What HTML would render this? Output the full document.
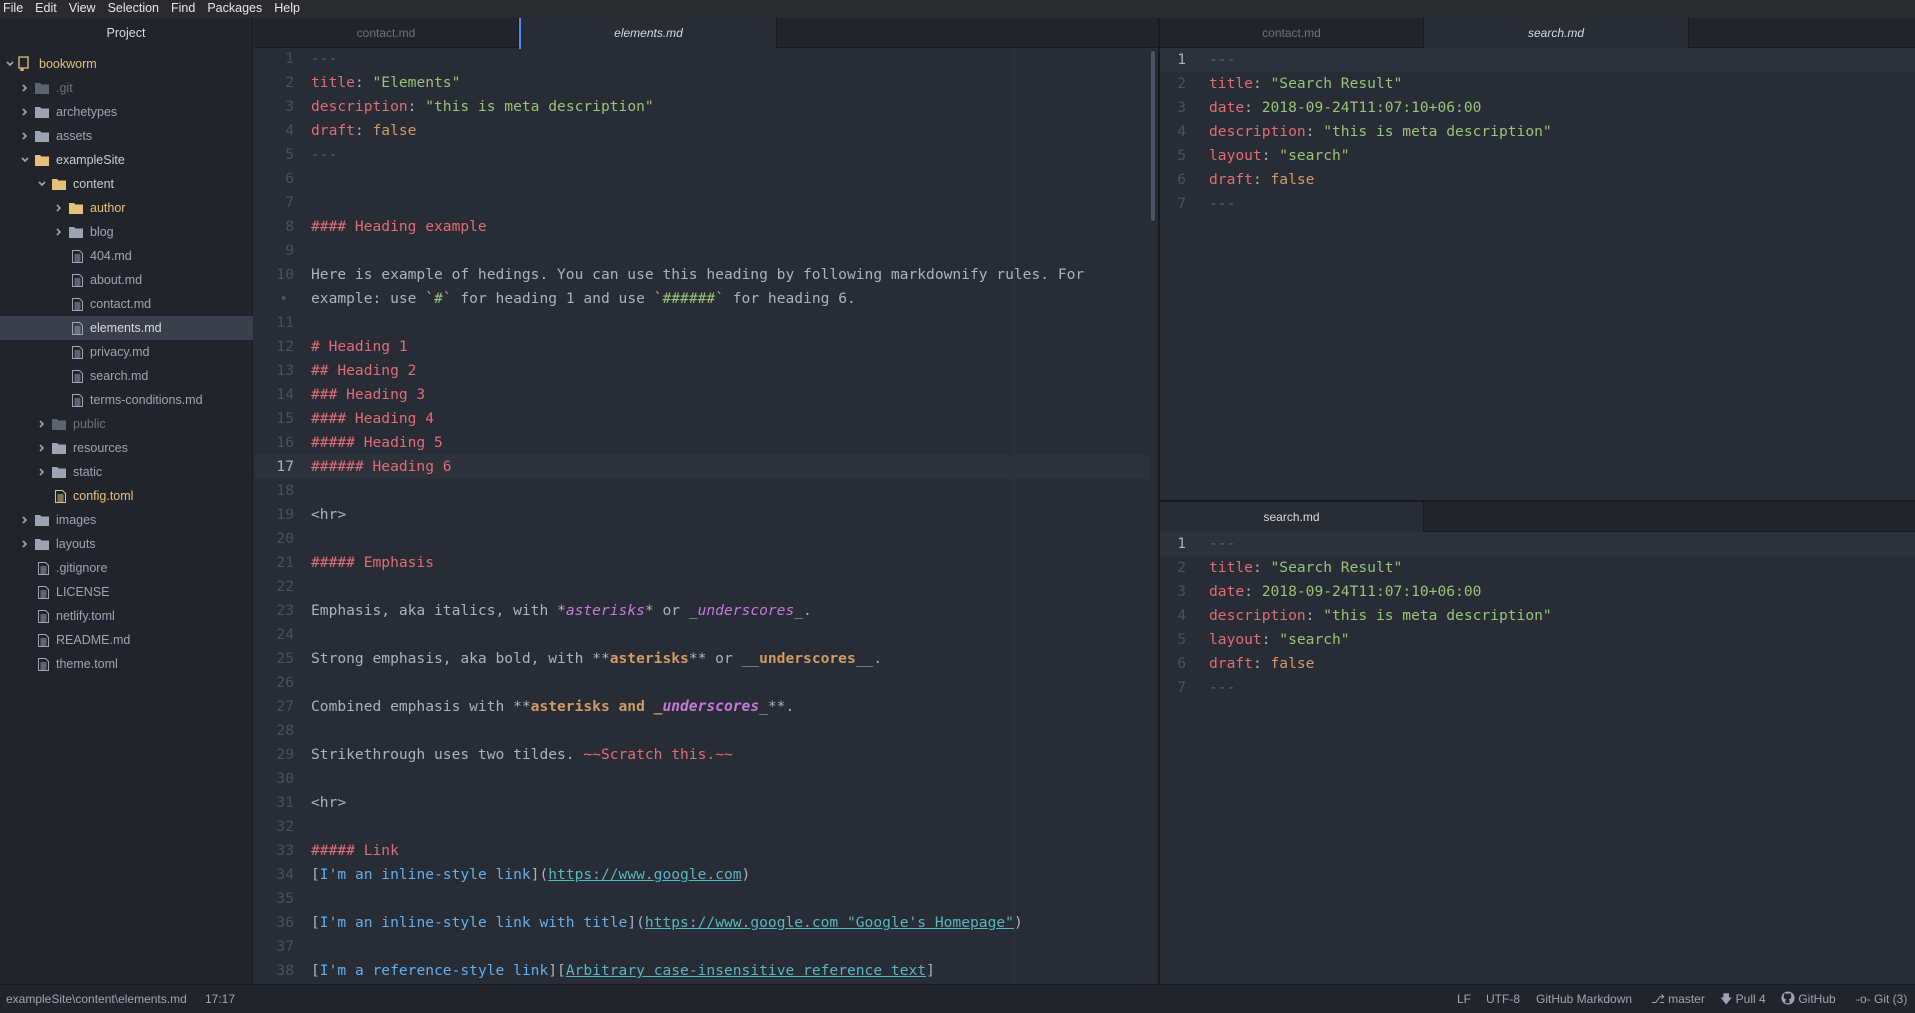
<!DOCTYPE html>
<html><head><meta charset="utf-8"><style>
*{margin:0;padding:0;box-sizing:border-box}
body{width:1915px;height:1013px;overflow:hidden;background:#282c34;font-family:"Liberation Sans",sans-serif;position:relative}
.abs{position:absolute}
#menu{left:0;top:0;width:1915px;height:18px;background:#2a2b2e;color:#e6e6e6;font-size:12.5px;line-height:16px}
#menu span{margin:0 0 0 3px;padding-right:9px}
#side{left:0;top:18px;width:253px;height:966px;background:#21252b;border-right:1px solid #181a1f}
#side .hd{height:30px;line-height:30px;text-align:center;color:#d7dae0;font-size:12.5px}
.row{position:absolute;left:0;width:253px;height:24px;line-height:24px;font-size:12.5px;color:#9da5b4;white-space:nowrap}
.row svg{position:absolute;top:6px}
.sel{background:#3a3f4b;color:#d7dae0}
.tabs{background:#21252b;border-bottom:1px solid #181a1f;height:30px}
.tab{position:absolute;top:0;height:30px;line-height:30px;text-align:center;font-size:12px;color:#6b717d;border-right:1px solid #181a1f}
.tab.act{background:#282c34;color:#d7dae0;font-style:italic;height:31px}
.code{font-family:"DejaVu Sans Mono","Liberation Mono",monospace;font-size:14.6px;white-space:pre;color:#abb2bf}
.ln{position:absolute;height:24px;line-height:24px;text-align:right;color:#495162;font-family:"DejaVu Sans Mono",monospace;font-size:14.6px}
.tx{position:absolute;height:24px;line-height:24px}
.r{color:#e06c75}.g{color:#98c379}.o{color:#d19a66}.c{color:#5c6370}.p{color:#c678dd;font-style:italic}.b{color:#61afef}.u{color:#56b6c2;text-decoration:underline}.ob{color:#d19a66;font-weight:bold}.pb{color:#c678dd;font-style:italic;font-weight:bold}
#status{left:0;top:984px;width:1915px;height:29px;background:#21252b;border-top:1px solid #181a1f;color:#9da5b4;font-size:12px;line-height:28px}
#status span{position:absolute;top:0}
</style></head><body>
<div id="menu" class="abs"><span>File</span><span>Edit</span><span>View</span><span>Selection</span><span>Find</span><span>Packages</span><span>Help</span></div>

<div id="side" class="abs">
<div class="hd">Project</div>
</div>
<div id="tree"></div>

<div class="abs tabs" style="left:254px;top:18px;width:905px">
 <div class="tab" style="left:0;width:265px">contact.md</div>
 <div class="tab act" style="left:265px;width:258px;border-left:2px solid #568af2">elements.md</div>
</div>
<div class="abs" style="left:1014px;top:48px;width:1px;height:936px;background:#2f343d"></div>
<div class="abs" style="left:1151px;top:51px;width:4px;height:170px;background:#4b5263;border-radius:2px"></div>
<div class="abs" style="left:1158px;top:18px;width:2px;height:966px;background:#181a1f"></div>
<div class="abs" style="left:254px;top:455px;width:896px;height:24px;background:#2c313a"></div>
<div id="L" class="code"></div>

<div class="abs tabs" style="left:1160px;top:18px;width:755px">
 <div class="tab" style="left:0;width:264px">contact.md</div>
 <div class="tab act" style="left:264px;width:265px">search.md</div>
</div>
<div class="abs" style="left:1160px;top:48px;width:755px;height:24px;background:#2c313a"></div>
<div class="abs" style="left:1160px;top:500px;width:755px;height:2px;background:#181a1f"></div>
<div class="abs tabs" style="left:1160px;top:502px;width:755px">
 <div class="tab act" style="left:0;width:264px;font-style:normal">search.md</div>
</div>
<div class="abs" style="left:1160px;top:532px;width:755px;height:24px;background:#2c313a"></div>
<div id="R" class="code"></div>

<div id="status" class="abs">
<span style="left:6px">exampleSite\content\elements.md</span>
<span style="left:205px">17:17</span>
<span style="left:1457px">LF</span>
<span style="left:1486px">UTF-8</span>
<span style="left:1536px">GitHub Markdown</span>
<span style="left:1651px">&#x2387; master</span>
<span style="left:1720px">&#x1F847; Pull 4</span>
<span style="left:1781px"><svg width="14" height="14" viewBox="0 0 16 16" style="vertical-align:-2px"><circle cx="8" cy="8" r="7.5" fill="#9da5b4"/><path d="M5 14v-3c0-1 1-1.5 1-1.5-2-.3-3-1.2-3-3.3 0-.8.3-1.4.7-1.9-.1-.3-.2-1 .1-1.8 0 0 .7-.1 1.9.7a6 6 0 0 1 3.4 0c1.2-.8 1.9-.7 1.9-.7.3.8.2 1.5.1 1.8.4.5.7 1.1.7 1.9 0 2.1-1 3-3 3.3 0 0 1 .5 1 1.5v3z" fill="#21252b"/></svg> GitHub</span>
<span style="left:1856px">-o- Git (3)</span>
</div>

<script>
function folder(c){return '<svg width="14" height="12" viewBox="0 0 14 12"><path d="M0 1h5l1.5 1.5H14V12H0z" fill="'+c+'"/></svg>'}
function file(c){return '<svg width="11" height="13" viewBox="0 0 11 13"><path d="M.5.5h7l3 3v9h-10z" fill="none" stroke="'+c+'"/><path d="M2.5 5h6M2.5 7h6M2.5 9h6M2.5 11h6" stroke="'+c+'"/></svg>'}
function chev(open){return open?'<svg width="8" height="8" viewBox="0 0 8 8" style="top:8px"><path d="M1 2l3 3 3-3" fill="none" stroke="#9da5b4" stroke-width="1.6"/></svg>':'<svg width="8" height="8" viewBox="0 0 8 8" style="top:8px"><path d="M2 1l3 3-3 3" fill="none" stroke="#9da5b4" stroke-width="1.6"/></svg>'}
var T=[
[0,'bookworm','book',1,'#e5c07b'],
[1,'.git','f',0,'#6b717d','#5c6370'],
[1,'archetypes','f',0],[1,'assets','f',0],
[1,'exampleSite','f',1,'#c8ccd4','#e5c07b'],
[2,'content','f',1,'#c8ccd4','#e5c07b'],
[3,'author','f',0,'#e5c07b','#e5c07b'],[3,'blog','f',0],
[3,'404.md','d'],[3,'about.md','d'],[3,'contact.md','d'],[3,'elements.md','d',null,'#d7dae0'],
[3,'privacy.md','d'],[3,'search.md','d'],[3,'terms-conditions.md','d'],
[2,'public','f',0,'#6b717d','#5c6370'],[2,'resources','f',0],[2,'static','f',0],
[2,'config.toml','d',null,'#e5c07b','#e5c07b'],
[1,'images','f',0],[1,'layouts','f',0],
[1,'.gitignore','d'],[1,'LICENSE','d'],[1,'netlify.toml','d'],[1,'README.md','d'],[1,'theme.toml','d']];
var h='';
T.forEach(function(t,i){
 var lv=t[0],x0=lv*17+6;var col=t[4]||'#9da5b4';
 var cls='row'+(t[1]=='elements.md'?' sel':'');
 var s='<div class="'+cls+'" style="top:'+(52+i*24)+'px;color:'+col+'">';
 if(t[2]=='book'){s+='<span style="position:absolute;left:6px">'+chev(1)+'</span><svg width="12" height="15" viewBox="0 0 12 15" style="position:absolute;left:18px;top:4px"><path d="M1 1h9v11H1z M3 12v3l1-1 1 1v-3" fill="none" stroke="#e5c07b" stroke-width="1.3"/></svg><span style="position:absolute;left:39px">bookworm</span>';}
 else{
  var isF=t[2]=='f';
  if(isF)s+='<span style="position:absolute;left:'+(x0-2)+'px;top:0">'+chev(t[3])+'</span>';
  var icol=t[5]||'#9da5b4';
  var ix=x0+12+(isF?0:3);
  s+='<span style="position:absolute;left:'+ix+'px;top:0">'+(isF?folder(icol):file(icol))+'</span>';
  s+='<span style="position:absolute;left:'+(x0+33)+'px">'+t[1]+'</span>';
 }
 h+=s+'</div>';
});
document.getElementById('tree').innerHTML=h;

function E(s){return s.replace(/&/g,'&amp;').replace(/</g,'&lt;')}
function sp(c,t){return '<span class="'+c+'">'+E(t)+'</span>'}
var L=[
['1',sp('c','---')],
['2',sp('r','title')+': '+sp('g','"Elements"')],
['3',sp('r','description')+': '+sp('g','"this is meta description"')],
['4',sp('r','draft')+': '+sp('o','false')],
['5',sp('c','---')],['6',''],['7',''],
['8',sp('r','#### Heading example')],['9',''],
['10','Here is example of hedings. You can use this heading by following markdownify rules. For'],
['•','example: use `'+sp('g','#')+'` for heading 1 and use `'+sp('g','######')+'` for heading 6.'],
['11',''],
['12',sp('r','# Heading 1')],['13',sp('r','## Heading 2')],['14',sp('r','### Heading 3')],['15',sp('r','#### Heading 4')],['16',sp('r','##### Heading 5')],['17',sp('r','###### Heading 6')],
['18',''],['19','&lt;hr>'],['20',''],['21',sp('r','##### Emphasis')],['22',''],
['23','Emphasis, aka italics, with *'+sp('p','asterisks')+'* or _'+sp('p','underscores')+'_.'],
['24',''],
['25','Strong emphasis, aka bold, with **'+sp('ob','asterisks')+'** or __'+sp('ob','underscores')+'__.'],
['26',''],
['27','Combined emphasis with **'+sp('ob','asterisks and _')+sp('pb','underscores')+'_**.'],
['28',''],
['29','Strikethrough uses two tildes. '+sp('r','~~Scratch this.~~')],
['30',''],['31','&lt;hr>'],['32',''],['33',sp('r','##### Link')],
['34','['+sp('b',"I'm an inline-style link")+']('+sp('u','https://www.google.com')+')'],
['35',''],
['36','['+sp('b',"I'm an inline-style link with title")+']('+sp('u','https://www.google.com "Google\'s Homepage"')+')'],
['37',''],
['38','['+sp('b',"I'm a reference-style link")+']['+sp('u','Arbitrary case-insensitive reference text')+']']
];
var o='';
L.forEach(function(l,i){var y=47+i*24;
 o+='<div class="ln" style="left:254px;width:40px;top:'+y+'px;'+(l[0]=='17'?'color:#abb2bf;':'')+(l[0]=='•'?'padding-right:6px;':'')+'">'+l[0]+'</div>';
 o+='<div class="tx" style="left:311px;top:'+y+'px">'+l[1]+'</div>';});
document.getElementById('L').innerHTML=o;
var R=[sp('c','---'),sp('r','title')+': '+sp('g','"Search Result"'),sp('r','date')+': '+sp('g','2018-09-24T11:07:10+06:00'),sp('r','description')+': '+sp('g','"this is meta description"'),sp('r','layout')+': '+sp('g','"search"'),sp('r','draft')+': '+sp('o','false'),sp('c','---')];
var r='';
[48,532].forEach(function(b){R.forEach(function(t,i){var y=b+i*24;
 r+='<div class="ln" style="left:1160px;width:26px;top:'+y+'px;'+(i==0?'color:#abb2bf':'')+'">'+(i+1)+'</div><div class="tx" style="left:1209px;top:'+y+'px">'+t+'</div>';});});
document.getElementById('R').innerHTML=r;
</script>
</body></html>
